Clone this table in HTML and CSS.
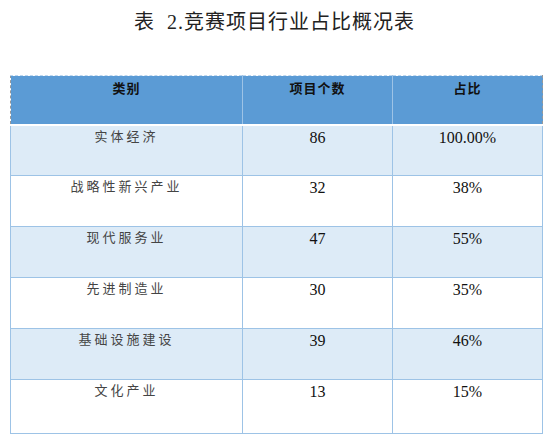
FILE: index.html
```html
<!DOCTYPE html>
<html lang="zh">
<head>
  <meta charset="UTF-8">
  <title>竞赛项目行业占比概况表</title>
  <link rel="stylesheet" href="styles.css">
</head>
<body>
  <div class="Pagina">
    <h1 class="Titulo">表&nbsp; 2.竞赛项目行业占比概况表</h1>

    <table class="Tabela">
      <thead class="TabelaCabecalho">
        <tr>
          <th class="ColCategoria">类别</th>
          <th class="ColNumero">项目个数</th>
          <th class="ColPercentual">占比</th>
        </tr>
      </thead>
      <tbody class="TabelaConteudo">
        <tr class="LinhaAzul">
          <td class="Categoria">实体经济</td>
          <td class="Numero">86</td>
          <td class="Numero">100.00%</td>
        </tr>
        <tr>
          <td class="Categoria">战略性新兴产业</td>
          <td class="Numero">32</td>
          <td class="Numero">38%</td>
        </tr>
        <tr class="LinhaAzul">
          <td class="Categoria">现代服务业</td>
          <td class="Numero">47</td>
          <td class="Numero">55%</td>
        </tr>
        <tr>
          <td class="Categoria">先进制造业</td>
          <td class="Numero">30</td>
          <td class="Numero">35%</td>
        </tr>
        <tr class="LinhaAzul">
          <td class="Categoria">基础设施建设</td>
          <td class="Numero">39</td>
          <td class="Numero">46%</td>
        </tr>
        <tr class="LinhaUltima">
          <td class="Categoria">文化产业</td>
          <td class="Numero">13</td>
          <td class="Numero">15%</td>
        </tr>
      </tbody>
    </table>
  </div>
</body>
</html>
```

FILE: styles.css
```css
body {
  margin: 0;
  background-color: #fff;
}
.Pagina {
  width: 549px;
  height: 444px;
  overflow: hidden;
}
.Titulo {
  margin: 0;
  padding-top: 9px;
  height: 75px;
  box-sizing: border-box;
  text-align: center;
  font-family: "Liberation Serif", "Noto Sans CJK SC", serif;
  font-weight: normal;
  font-size: 20px;
  line-height: 26px;
  letter-spacing: 1px;
  color: #222;
}
.Tabela {
  margin-left: 10px;
  width: 533px;
  border-collapse: collapse;
  table-layout: fixed;
}
.ColCategoria {
  width: 232px;
}
.ColNumero {
  width: 150px;
}
.TabelaCabecalho th {
  height: 49px;
  padding: 3px 0 0 0;
  box-sizing: border-box;
  vertical-align: top;
  background-color: #5b9bd5;
  border-top: 1px dashed #bcd6ee;
  border-left: 1px solid #9dc3e6;
  border-right: 1px solid #9dc3e6;
  border-bottom: 2px solid #fff;
  font-family: "Noto Sans CJK SC", sans-serif;
  font-size: 13px;
  font-weight: bold;
  line-height: 18px;
  letter-spacing: 1px;
  color: #111;
}
.TabelaCabecalho th:first-child {
  border-left: 1px dashed #999;
}
.TabelaCabecalho th:last-child {
  border-right: 1px dashed #999;
}
.TabelaConteudo td {
  height: 51px;
  padding: 2px 0 0 0;
  box-sizing: border-box;
  vertical-align: top;
  text-align: center;
  border: 1px solid #9dc3e6;
}
.LinhaAzul td {
  background-color: #ddebf7;
}
.LinhaUltima td {
  height: 54px;
}
.Categoria {
  padding-top: 0;
  font-family: "Noto Sans CJK SC", sans-serif;
  font-size: 13px;
  line-height: 16px;
  letter-spacing: 3px;
  color: #444;
}
.Numero {
  font-family: "Liberation Serif", serif;
  font-size: 16px;
  line-height: 20px;
  color: #111;
}
```
